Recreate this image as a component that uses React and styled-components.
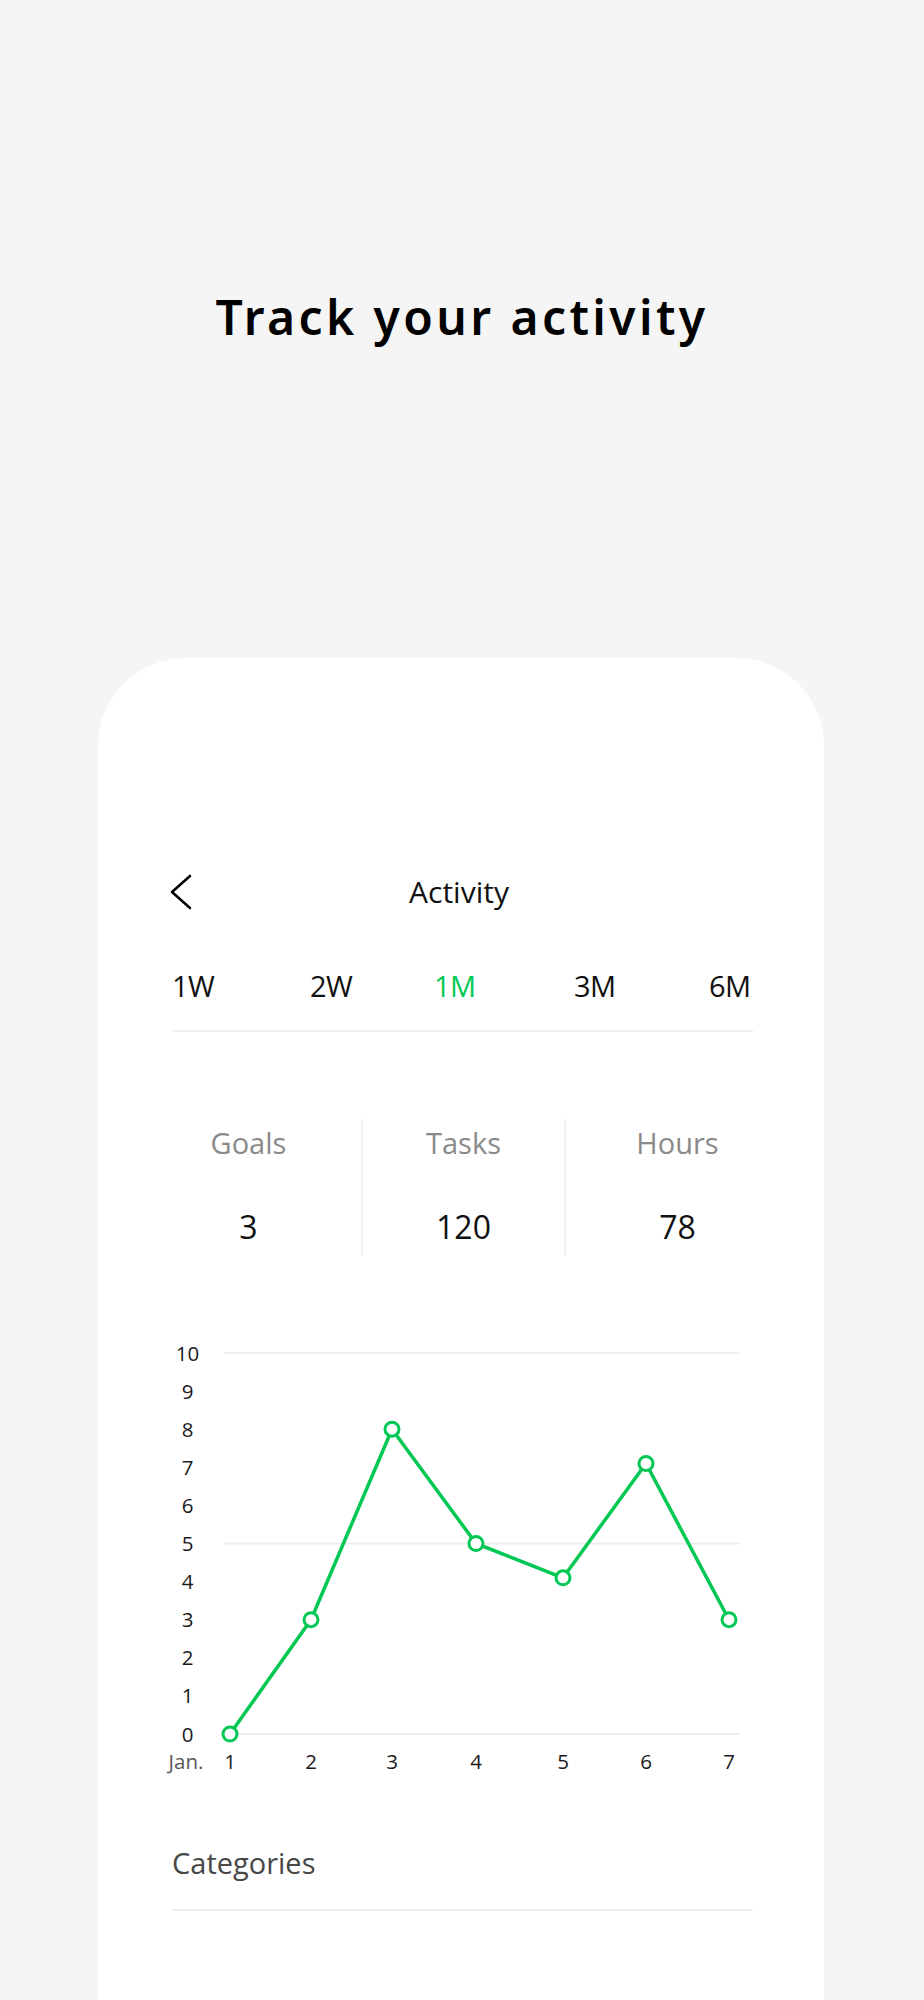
import React, { useState } from 'react';
import styled, { createGlobalStyle } from 'styled-components';

const GlobalStyle = createGlobalStyle`
  body {
    margin: 0;
    background: #f5f5f5;
    font-family: "Open Sans", "Noto Sans", sans-serif;
  }
`;

const Page = styled.div`
  width: 924px;
  min-height: 2000px;
  overflow: hidden;
  background: #f5f5f5;
`;

const Hero = styled.h1`
  margin: 0;
  padding-top: 287px;
  height: 60px;
  line-height: 60px;
  text-align: center;
  font-family: "Noto Sans", "Open Sans", sans-serif;
  font-weight: 600;
  font-size: 48px;
  letter-spacing: 3.4px;
  color: #000;
`;

const Card = styled.div`
  margin: 311px 0 0 98px;
  width: 726px;
  min-height: 1400px;
  box-sizing: border-box;
  padding: 213px 71px 0 74px;
  background: #fff;
  border-radius: 88px 88px 0 0;
`;

const TopBar = styled.div`
  display: grid;
  grid-template-columns: 40px 1fr 40px;
  align-items: center;
  height: 40px;
`;

const BackButton = styled.button`
  display: flex;
  align-items: center;
  padding: 0;
  margin-left: -3px;
  border: none;
  background: none;
  cursor: pointer;
`;

const ScreenTitle = styled.div`
  text-align: center;
  font-size: 30px;
  color: #111;
  margin-left: -7px;
`;

const Tabs = styled.div`
  display: grid;
  grid-template-columns: 138px 124px 140px 135px 44px;
  margin-top: 55px;
  padding-bottom: 24px;
  border-bottom: 2px solid #efefef;
`;

const Tab = styled.button`
  justify-self: start;
  padding: 0;
  border: none;
  background: none;
  font-family: inherit;
  font-size: 29px;
  line-height: 40px;
  letter-spacing: -0.5px;
  color: ${p => (p.$active ? '#00c853' : '#111')};
  cursor: pointer;
`;

const Stats = styled.div`
  display: grid;
  grid-template-columns: 189px 203px 189px;
  margin-top: 87px;
`;

const Stat = styled.div`
  display: flex;
  flex-direction: column;
  align-items: center;
  gap: 44px;
  padding: 4px 0 9px;
  padding-left: ${p => (p.$side === 'right' ? '36px' : '0')};
  padding-right: ${p => (p.$side === 'left' ? '36px' : '0')};
  border-left: ${p => (p.$side === 'left' ? 'none' : '2px solid #f0f0f0')};
`;

const StatLabel = styled.div`
  font-size: 29px;
  line-height: 40px;
  color: #8a8a8a;
`;

const StatValue = styled.div`
  font-size: 32px;
  line-height: 40px;
  color: #111;
`;

const ChartWrap = styled.div`
  margin-top: 74px;
  svg {
    display: block;
    overflow: visible;
  }
`;

const Section = styled.div`
  margin-top: 63px;
  padding-bottom: 26px;
  border-bottom: 2px solid #efefef;
  font-size: 29px;
  line-height: 40px;
  color: #474747;
`;

const GREEN = '#00c853';
const data = [0, 3, 8, 5, 4.1, 7.1, 3];
const xs = [58, 139, 220, 304, 391, 474, 557];
const yOf = v => 404 - v * 38.1;

const Chart = () => {
  const pts = data.map((v, i) => `${xs[i]},${yOf(v)}`).join(' ');
  return (
    <svg width="581" height="450" viewBox="0 0 581 450">
      {[10, 5, 0].map(v => (
        <line key={v} x1="52" x2="568" y1={yOf(v)} y2={yOf(v)} stroke="#efefef" strokeWidth="2" />
      ))}
      {[10, 9, 8, 7, 6, 5, 4, 3, 2, 1, 0].map(v => (
        <text key={v} x="15.5" y={yOf(v) + 7.5} textAnchor="middle" fontSize="20.5" fill="#1a1a1a" fontFamily="Open Sans">
          {v}
        </text>
      ))}
      <text x="14" y="438.5" textAnchor="middle" fontSize="20.5" fill="#555" fontFamily="Open Sans">Jan.</text>
      {data.map((_, i) => (
        <text key={i} x={xs[i]} y="438.5" textAnchor="middle" fontSize="20.5" fill="#1a1a1a" fontFamily="Open Sans">
          {i + 1}
        </text>
      ))}
      <polyline points={pts} fill="none" stroke={GREEN} strokeWidth="3.5" strokeLinejoin="round" />
      {data.map((v, i) => (
        <circle key={i} cx={xs[i]} cy={yOf(v)} r="7" fill="#fff" stroke={GREEN} strokeWidth="3" />
      ))}
    </svg>
  );
};

export default function App() {
  const [tab, setTab] = useState('1M');
  const tabs = ['1W', '2W', '1M', '3M', '6M'];
  const stats = [
    { label: 'Goals', value: 3, side: 'left' },
    { label: 'Tasks', value: 120, side: 'middle' },
    { label: 'Hours', value: 78, side: 'right' },
  ];

  return (
    <Page>
      <GlobalStyle />
      <Hero>Track your activity</Hero>
      <Card>
        <TopBar>
          <BackButton aria-label="Back">
            <svg width="24" height="36" viewBox="0 0 24 36">
              <polyline points="21,2 3,18 21,34" fill="none" stroke="#000" strokeWidth="2.6" strokeLinecap="round" strokeLinejoin="round" />
            </svg>
          </BackButton>
          <ScreenTitle>Activity</ScreenTitle>
          <span />
        </TopBar>
        <Tabs>
          {tabs.map(t => (
            <Tab key={t} $active={t === tab} onClick={() => setTab(t)}>{t}</Tab>
          ))}
        </Tabs>
        <Stats>
          {stats.map(s => (
            <Stat key={s.label} $side={s.side}>
              <StatLabel>{s.label}</StatLabel>
              <StatValue>{s.value}</StatValue>
            </Stat>
          ))}
        </Stats>
        <ChartWrap>
          <Chart />
        </ChartWrap>
        <Section>Categories</Section>
      </Card>
    </Page>
  );
}
